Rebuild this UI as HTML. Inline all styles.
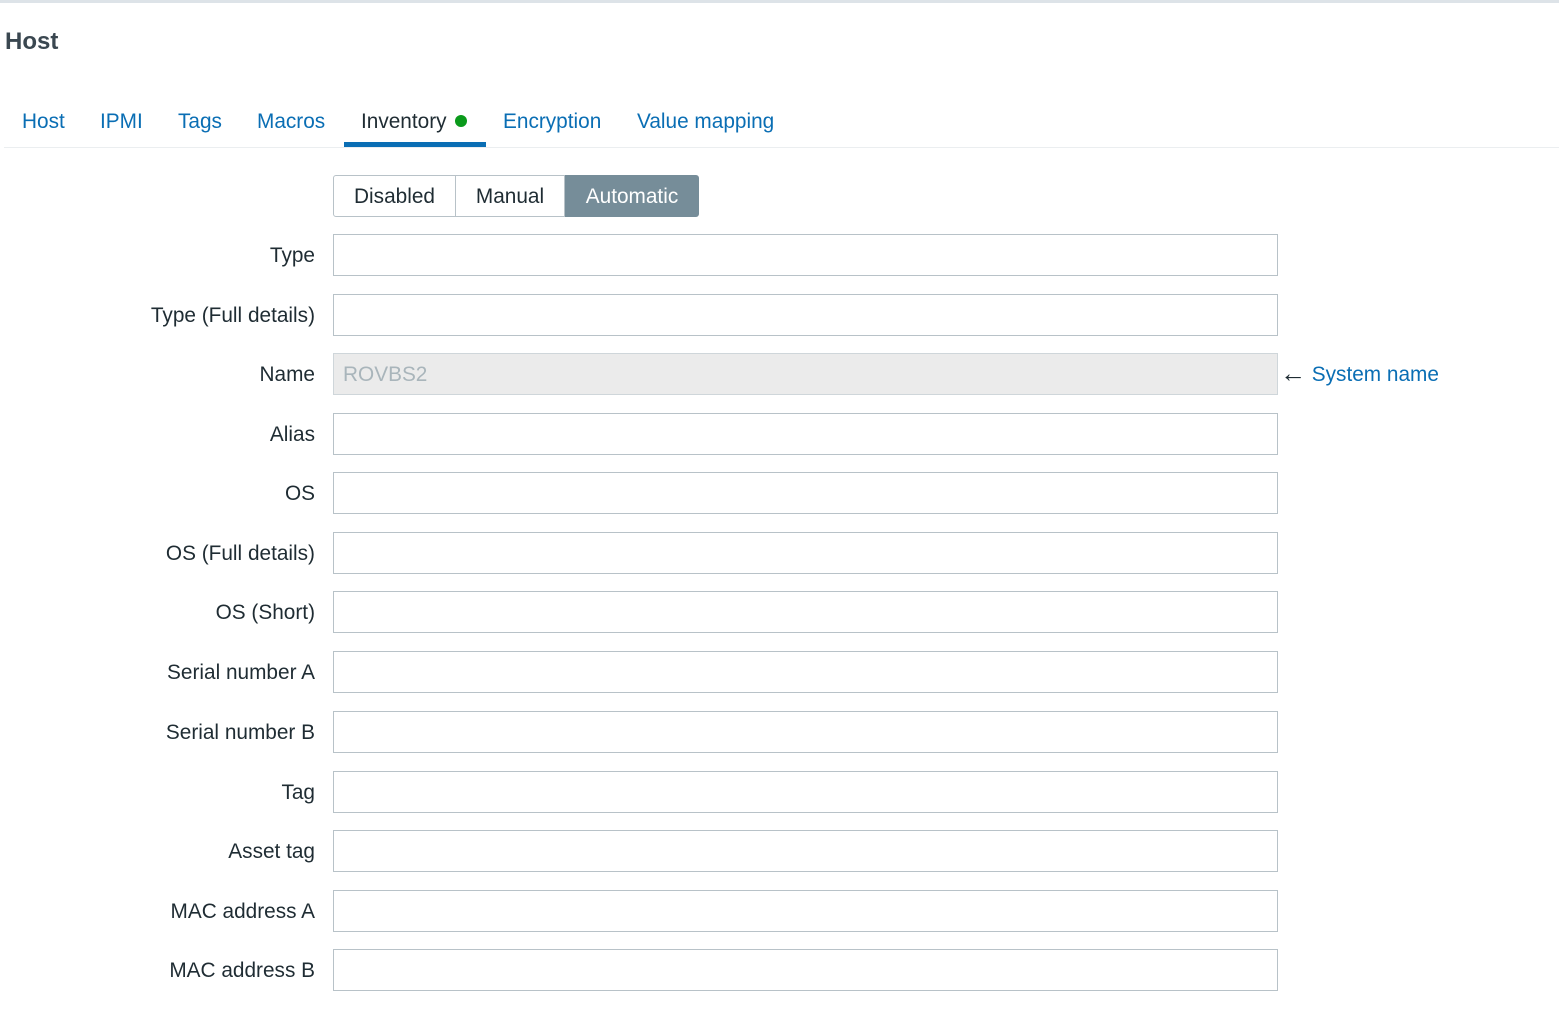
<!DOCTYPE html>
<html><head><meta charset="utf-8">
<style>
*{box-sizing:border-box;margin:0;padding:0}
html,body{width:1559px;height:1009px;background:#fff;overflow:hidden;font-family:"Liberation Sans",Arial,sans-serif;color:#1f2c33}
.top{position:absolute;left:0;top:0;width:1559px;height:3px;background:#dde3e8}
h1{position:absolute;left:5px;top:28px;font-size:24px;font-weight:bold;color:#3a4750}
.tabs{position:absolute;left:4px;top:100px;width:1555px;height:48px;border-bottom:1px solid #ebeef0}
.tab{position:absolute;top:10px;font-size:20.8px;color:#0a6eb4}
.tab.act{color:#1f2c33}
.ul{position:absolute;left:340px;top:42px;width:142px;height:5px;background:#0a6eb4}
.dot{display:inline-block;width:12px;height:12px;border-radius:50%;background:#0a9a1b;margin-left:8px;vertical-align:1px}
.seg{position:absolute;left:333px;top:175px;height:42px;display:flex;font-size:20.8px}
.seg div{height:42px;line-height:41px;border:1px solid #b8c2c8}
.seg .a{border-radius:3px 0 0 3px;width:123px;text-align:center}
.seg .b{border-left:none;width:109px;text-align:center}
.seg .c{background:#768d99;border-color:#768d99;color:#fff;border-radius:0 3px 3px 0;width:134px;text-align:center}
.lbl{position:absolute;right:1244px;font-size:20.8px;line-height:44px;white-space:nowrap}
.inp{position:absolute;left:333px;width:945px;height:42px;border:1px solid #b8c2c8;background:#fff}
.inp.ro{background:#ebebeb;color:#a9b5bb;font-size:20.8px;line-height:42px;padding-left:9px;border-color:#cfd6da}
.sys{position:absolute;left:1280px;top:353px;line-height:44px;font-size:20.8px;color:#0a6eb4}
.sys span{color:#1f2c33;font-size:26px;line-height:20px;vertical-align:-1px}
</style></head><body>
<div class="top"></div>
<h1>Host</h1>
<div class="tabs">
<span class="tab" style="left:18px">Host</span>
<span class="tab" style="left:96px">IPMI</span>
<span class="tab" style="left:174px">Tags</span>
<span class="tab" style="left:253px">Macros</span>
<span class="tab act" style="left:357px">Inventory<span class="dot"></span></span>
<span class="tab" style="left:499px">Encryption</span>
<span class="tab" style="left:633px">Value mapping</span>
<div class="ul"></div>
</div>
<div class="seg"><div class="a">Disabled</div><div class="b">Manual</div><div class="c">Automatic</div></div>

<div class="lbl" style="top:234px">Type</div><div class="inp" style="top:234px"></div>
<div class="lbl" style="top:294px">Type (Full details)</div><div class="inp" style="top:294px"></div>
<div class="lbl" style="top:353px">Name</div><div class="inp ro" style="top:353px">ROVBS2</div>
<div class="sys"><span>←</span> System name</div>
<div class="lbl" style="top:413px">Alias</div><div class="inp" style="top:413px"></div>
<div class="lbl" style="top:472px">OS</div><div class="inp" style="top:472px"></div>
<div class="lbl" style="top:532px">OS (Full details)</div><div class="inp" style="top:532px"></div>
<div class="lbl" style="top:591px">OS (Short)</div><div class="inp" style="top:591px"></div>
<div class="lbl" style="top:651px">Serial number A</div><div class="inp" style="top:651px"></div>
<div class="lbl" style="top:711px">Serial number B</div><div class="inp" style="top:711px"></div>
<div class="lbl" style="top:771px">Tag</div><div class="inp" style="top:771px"></div>
<div class="lbl" style="top:830px">Asset tag</div><div class="inp" style="top:830px"></div>
<div class="lbl" style="top:890px">MAC address A</div><div class="inp" style="top:890px"></div>
<div class="lbl" style="top:949px">MAC address B</div><div class="inp" style="top:949px"></div>
</body></html>
